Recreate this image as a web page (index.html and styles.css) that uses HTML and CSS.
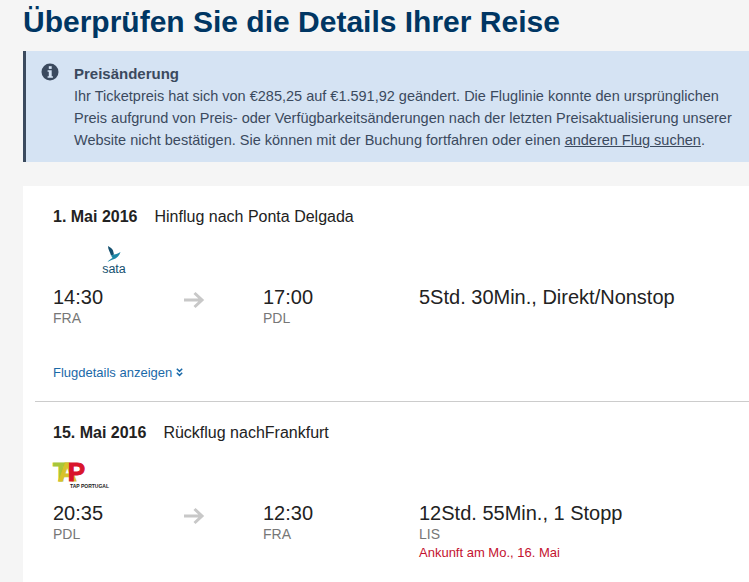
FILE: index.html
```html
<!DOCTYPE html>
<html lang="de">

<head>
    <meta charset="UTF-8">
    <meta name="viewport" content="width=device-width, initial-scale=1.0">
    <title>Überprüfen Sie die Details Ihrer Reise</title>
    <link rel="stylesheet" href="styles.css">
</head>

<body>
    <div class="page">
        <h1>Überprüfen Sie die Details Ihrer Reise</h1>

        <div class="notice">
            <svg class="notice-icon" width="18" height="18" viewBox="0 0 18 18">
                <circle cx="9" cy="9" r="8.5" fill="#3b4a5e" />
                <rect x="7.8" y="3.2" width="2.9" height="2.7" fill="#d5e3f3" />
                <path d="M6.6 7.2h4.1v6h1.2v1.6H6.6v-1.6h1.2V8.8H6.6z" fill="#d5e3f3" />
            </svg>
            <div class="notice-text">
                <strong>Preisänderung</strong><br>
                Ihr Ticketpreis hat sich von €285,25 auf €1.591,92 geändert. Die Fluglinie konnte den ursprünglichen<br>
                Preis aufgrund von Preis- oder Verfügbarkeitsänderungen nach der letzten Preisaktualisierung unserer<br>
                Website nicht bestätigen. Sie können mit der Buchung fortfahren oder einen <a href="#">anderen Flug suchen</a>.
            </div>
        </div>

        <div class="card">
            <section class="leg">
                <div class="leg-title"><strong>1. Mai 2016</strong><span>Hinflug nach Ponta Delgada</span></div>
                <div class="logo-sata">
                    <svg width="14" height="16" viewBox="0 0 14 16">
                        <path d="M1 0 C3 1.5 5.5 2.5 6 4.5 L7 8.5 L4 9.5 C3 6 1 3.5 1 0z" fill="#14506f" />
                        <path d="M4 9.5 L7 8.5 C9 8.5 11 7.5 13.5 6 C12.5 9 11 11 8.5 12.5 C6 13.5 3 14.5 .5 16 C2 14 4.5 12.5 5.5 12z" fill="#1c87a6" />
                    </svg>
                    <span>sata</span>
                </div>
                <div class="times">
                    <div class="time-col">
                        <div class="time">14:30</div>
                        <div class="airport">FRA</div>
                    </div>
                    <div class="arrow-col">
                        <svg width="22" height="18" viewBox="0 0 22 18">
                            <path d="M1 9h18M11.5 2l7.5 7-7.5 7" fill="none" stroke="#c8c8c8" stroke-width="3" />
                        </svg>
                    </div>
                    <div class="time-col">
                        <div class="time">17:00</div>
                        <div class="airport">PDL</div>
                    </div>
                    <div class="duration-col">
                        <div class="time">5Std. 30Min., Direkt/Nonstop</div>
                    </div>
                </div>
                <a class="details-link" href="#">Flugdetails anzeigen
                    <svg width="7" height="9" viewBox="0 0 7 9">
                        <path d="M.8 .8l2.7 2.6L6.2 .8M.8 4.8l2.7 2.6 2.7-2.6" fill="none" stroke="#1a69a8" stroke-width="1.5" />
                    </svg>
                </a>
            </section>

            <section class="leg leg-return">
                <div class="leg-title"><strong>15. Mai 2016</strong><span>Rückflug nachFrankfurt</span></div>
                <div class="logo-tap">
                    <div class="tap-mark"><span class="tap-t">T</span><span class="tap-a">A</span><span class="tap-p">P</span></div>
                    <div class="tap-name">TAP PORTUGAL</div>
                </div>
                <div class="times">
                    <div class="time-col">
                        <div class="time">20:35</div>
                        <div class="airport">PDL</div>
                    </div>
                    <div class="arrow-col">
                        <svg width="22" height="18" viewBox="0 0 22 18">
                            <path d="M1 9h18M11.5 2l7.5 7-7.5 7" fill="none" stroke="#c8c8c8" stroke-width="3" />
                        </svg>
                    </div>
                    <div class="time-col">
                        <div class="time">12:30</div>
                        <div class="airport">FRA</div>
                    </div>
                    <div class="duration-col">
                        <div class="time">12Std. 55Min., 1 Stopp</div>
                        <div class="airport">LIS</div>
                        <div class="next-day">Ankunft am Mo., 16. Mai</div>
                    </div>
                </div>
            </section>
        </div>
    </div>
</body>

</html>
```

FILE: styles.css
```css
html,
body {
    height: 100%;
}

body {
    font-family: 'Liberation Sans', Arial, sans-serif;
    margin: 0;
    padding: 0;
    background-color: #f5f5f5;
    overflow: hidden;
}

.page {
    padding-left: 23px;
}

h1 {
    font-size: 30px;
    line-height: 34px;
    font-weight: 700;
    margin: 0;
    padding: 5px 0 12px;
    color: #003663;
}

.notice {
    display: flex;
    height: 111px;
    box-sizing: border-box;
    padding: 12px 0 0 15px;
    background-color: #d5e3f3;
    border-left: 3px solid #3b4a5e;
    color: #3b4a5e;
}

.notice-icon {
    flex: none;
    margin-right: 15px;
}

.notice-text {
    font-size: 14.5px;
    line-height: 22px;
    white-space: nowrap;
}

.notice-text strong {
    font-size: 15px;
}

.notice-text a {
    color: #3b4a5e;
}

.card {
    margin-top: 24px;
    height: 400px;
    background-color: #ffffff;
}

.leg {
    margin-left: 12px;
    padding-left: 18px;
}

.leg-title {
    padding-top: 22px;
    font-size: 16px;
    line-height: 18px;
    color: #222222;
}

.leg-title strong {
    margin-right: 17px;
}

.logo-sata {
    display: flex;
    flex-direction: column;
    align-items: center;
    width: 24px;
    margin: 20px 0 0 49px;
    height: 31px;
}

.logo-sata span {
    font-size: 12.5px;
    line-height: 11px;
    margin-top: 2px;
    color: #14506f;
}

.times {
    display: flex;
    margin-top: 9px;
}

.time-col {
    width: 130px;
}

.time-col:nth-child(3) {
    width: 156px;
}

.arrow-col {
    width: 80px;
    padding-top: 5px;
}

.time {
    font-size: 20px;
    line-height: 23px;
    color: #222222;
}

.airport {
    font-size: 14px;
    line-height: 19px;
    color: #777777;
}

.next-day {
    font-size: 13px;
    line-height: 18px;
    color: #c4122f;
}

.details-link {
    display: block;
    margin-top: 37px;
    height: 21px;
    font-size: 13px;
    line-height: 16px;
    color: #1a69a8;
    text-decoration: none;
}

.leg-return {
    margin-top: 15px;
    border-top: 1px solid #cccccc;
}

.logo-tap {
    height: 30px;
    margin-top: 21px;
}

.tap-mark {
    font-size: 26px;
    line-height: 19px;
    height: 19px;
    font-weight: 700;
    letter-spacing: -9px;
}

.tap-t {
    color: #a8c63a;
    -webkit-text-stroke: 1px #a8c63a;
}

.tap-a {
    color: #d8c22a;
    -webkit-text-stroke: 1px #d8c22a;
}

.tap-p {
    color: #d9152c;
    -webkit-text-stroke: 1px #d9152c;
}

.tap-name {
    margin-left: 17px;
    font-size: 5px;
    line-height: 8px;
    font-weight: 700;
    color: #222222;
}
```
